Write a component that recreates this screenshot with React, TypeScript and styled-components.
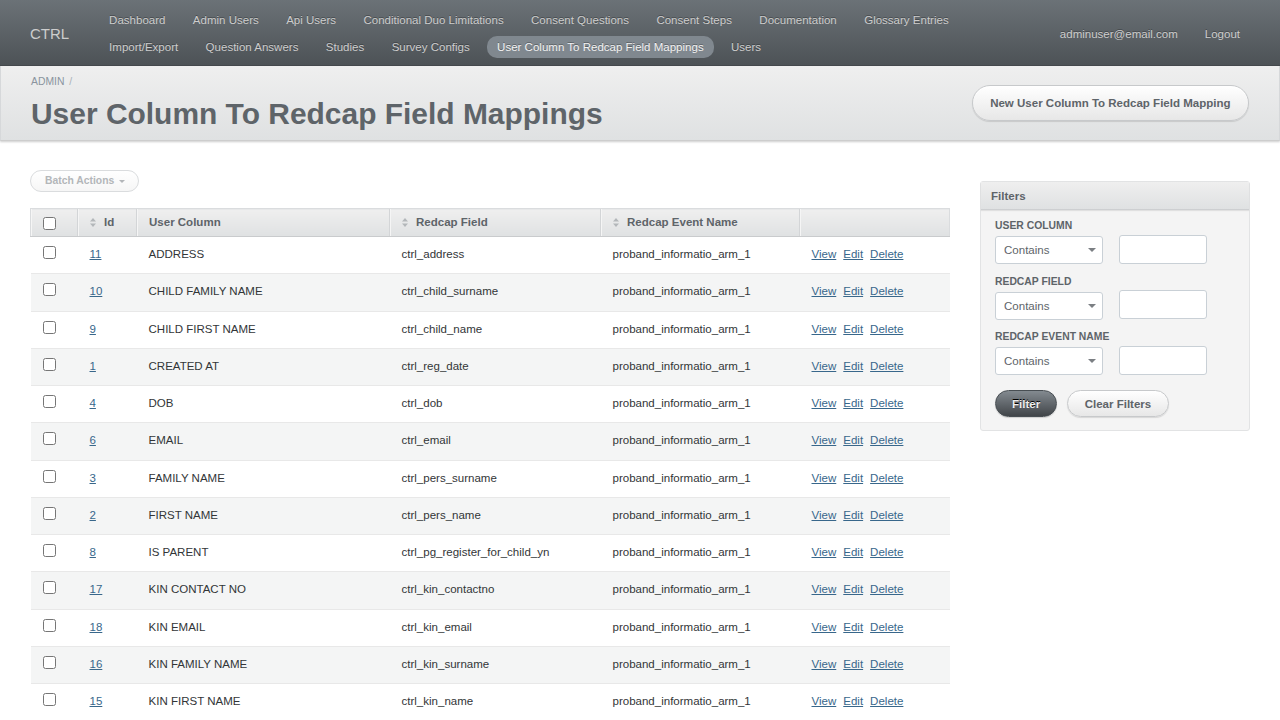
import React from 'react';
import styled, { createGlobalStyle } from 'styled-components';

const GlobalStyle = createGlobalStyle`
  html, body {
    margin: 0;
    padding: 0;
    background: #fff;
  }
  body {
    font-family: 'Liberation Sans', Arial, Helvetica, sans-serif;
    font-size: 11.52px;
    line-height: 1.5;
    color: #323537;
  }
  * {
    box-sizing: border-box;
  }
`;

type Mapping = {
  id: number;
  column: string;
  field: string;
  event: string;
};

const mappings: Mapping[] = [
  { id: 11, column: 'ADDRESS', field: 'ctrl_address', event: 'proband_informatio_arm_1' },
  { id: 10, column: 'CHILD FAMILY NAME', field: 'ctrl_child_surname', event: 'proband_informatio_arm_1' },
  { id: 9, column: 'CHILD FIRST NAME', field: 'ctrl_child_name', event: 'proband_informatio_arm_1' },
  { id: 1, column: 'CREATED AT', field: 'ctrl_reg_date', event: 'proband_informatio_arm_1' },
  { id: 4, column: 'DOB', field: 'ctrl_dob', event: 'proband_informatio_arm_1' },
  { id: 6, column: 'EMAIL', field: 'ctrl_email', event: 'proband_informatio_arm_1' },
  { id: 3, column: 'FAMILY NAME', field: 'ctrl_pers_surname', event: 'proband_informatio_arm_1' },
  { id: 2, column: 'FIRST NAME', field: 'ctrl_pers_name', event: 'proband_informatio_arm_1' },
  { id: 8, column: 'IS PARENT', field: 'ctrl_pg_register_for_child_yn', event: 'proband_informatio_arm_1' },
  { id: 17, column: 'KIN CONTACT NO', field: 'ctrl_kin_contactno', event: 'proband_informatio_arm_1' },
  { id: 18, column: 'KIN EMAIL', field: 'ctrl_kin_email', event: 'proband_informatio_arm_1' },
  { id: 16, column: 'KIN FAMILY NAME', field: 'ctrl_kin_surname', event: 'proband_informatio_arm_1' },
  { id: 15, column: 'KIN FIRST NAME', field: 'ctrl_kin_name', event: 'proband_informatio_arm_1' },
];

const navItems = [
  'Dashboard',
  'Admin Users',
  'Api Users',
  'Conditional Duo Limitations',
  'Consent Questions',
  'Consent Steps',
  'Documentation',
  'Glossary Entries',
  'Import/Export',
  'Question Answers',
  'Studies',
  'Survey Configs',
  'User Column To Redcap Field Mappings',
  'Users',
];

const ACTIVE_NAV = 'User Column To Redcap Field Mappings';

const filters = ['User Column', 'Redcap Field', 'Redcap Event Name'];

const SortIcon: React.FC = () => (
  <SortGlyph width="6" height="9" viewBox="0 0 6 9">
    <path d="M3 0 L6 3.4 L0 3.4 Z" fill="#b3b7ba" />
    <path d="M3 9 L6 5.6 L0 5.6 Z" fill="#b3b7ba" />
  </SortGlyph>
);

export default function App() {
  return (
    <>
      <GlobalStyle />
      <Header>
        <SiteTitle>CTRL</SiteTitle>
        <Tabs>
          {navItems.map((item) => (
            <Tab key={item} $current={item === ACTIVE_NAV}>
              {item}
            </Tab>
          ))}
        </Tabs>
        <UtilityNav>
          <Tab>adminuser@email.com</Tab>
          <Tab>Logout</Tab>
        </UtilityNav>
      </Header>

      <TitleBar>
        <div>
          <Breadcrumb>
            ADMIN <span>/</span>
          </Breadcrumb>
          <PageTitle>User Column To Redcap Field Mappings</PageTitle>
        </div>
        <ActionButton>New User Column To Redcap Field Mapping</ActionButton>
      </TitleBar>

      <Content>
        <Main>
          <BatchButton>
            Batch Actions <Caret />
          </BatchButton>

          <IndexTable>
            <colgroup>
              <col style={{ width: 47 }} />
              <col style={{ width: 59 }} />
              <col style={{ width: 253 }} />
              <col style={{ width: 211 }} />
              <col style={{ width: 199 }} />
              <col />
            </colgroup>
            <thead>
              <tr>
                <Th>
                  <Check type="checkbox" />
                </Th>
                <Th $sortable>
                  <SortIcon />
                  Id
                </Th>
                <Th>User Column</Th>
                <Th $sortable>
                  <SortIcon />
                  Redcap Field
                </Th>
                <Th $sortable>
                  <SortIcon />
                  Redcap Event Name
                </Th>
                <Th />
              </tr>
            </thead>
            <tbody>
              {mappings.map((row, i) => (
                <Row key={row.id} $even={i % 2 === 1}>
                  <Td>
                    <Check type="checkbox" />
                  </Td>
                  <Td>
                    <Link href="#">{row.id}</Link>
                  </Td>
                  <Td>{row.column}</Td>
                  <Td>{row.field}</Td>
                  <Td>{row.event}</Td>
                  <Td>
                    <MemberLink href="#">View</MemberLink>
                    <MemberLink href="#">Edit</MemberLink>
                    <MemberLink href="#">Delete</MemberLink>
                  </Td>
                </Row>
              ))}
            </tbody>
          </IndexTable>
        </Main>

        <Sidebar>
          <Panel>
            <PanelHeader>Filters</PanelHeader>
            <PanelBody>
              {filters.map((name) => (
                <FilterGroup key={name}>
                  <FilterLabel>{name}</FilterLabel>
                  <FilterRow>
                    <SelectWrap>
                      <Select defaultValue="contains">
                        <option value="contains">Contains</option>
                        <option value="equals">Equals</option>
                        <option value="starts_with">Starts with</option>
                        <option value="ends_with">Ends with</option>
                      </Select>
                      <SelectArrow />
                    </SelectWrap>
                    <TextInput type="text" />
                  </FilterRow>
                </FilterGroup>
              ))}
              <Buttons>
                <Button $primary>Filter</Button>
                <Button>Clear Filters</Button>
              </Buttons>
            </PanelBody>
          </Panel>
        </Sidebar>
      </Content>
    </>
  );
}

const Header = styled.header`
  display: flex;
  align-items: center;
  height: 66px;
  padding: 2px 30px 0;
  background: linear-gradient(180deg, #6b7277 0%, #4d5256 100%);
  border-bottom: 1px solid #45494d;
`;

const SiteTitle = styled.h1`
  margin: 0 30px 0 0;
  font-size: 14.98px;
  font-weight: normal;
  color: #cdcdcd;
  line-height: 1;
`;

const Tabs = styled.nav`
  flex: 1;
  display: flex;
  flex-wrap: wrap;
  column-gap: 7.4px;
  row-gap: 5px;
  align-content: center;
`;

const UtilityNav = styled.nav`
  display: flex;
  column-gap: 7px;
`;

const Tab = styled.a<{ $current?: boolean }>`
  display: block;
  height: 22px;
  line-height: 22px;
  padding: 0 10px;
  border-radius: 10px;
  color: ${(p) => (p.$current ? '#f2f2f2' : '#cdcdcd')};
  background: ${(p) => (p.$current ? '#80888f' : 'transparent')};
  text-shadow: 0 -1px 0 rgba(0, 0, 0, 0.3);
  white-space: nowrap;
  cursor: pointer;
`;

const TitleBar = styled.div`
  display: flex;
  align-items: center;
  justify-content: space-between;
  height: 75px;
  padding: 0 30px;
  background: linear-gradient(180deg, #efefef 0%, #dfe1e2 100%);
  border-bottom: 1px solid #cdcdcd;
  border-left: 1px solid #d6d8da;
  border-right: 1px solid #d6d8da;
  box-shadow: 0 1px 2px rgba(0, 0, 0, 0.2);
`;

const Breadcrumb = styled.div`
  font-size: 10.37px;
  line-height: 13px;
  color: #8a949e;
  margin-top: 1px;

  span {
    margin-left: 2px;
    color: #aab1b7;
  }
`;

const PageTitle = styled.h2`
  margin: 8px 0 0;
  font-size: 29.95px;
  line-height: 36px;
  font-weight: bold;
  color: #5e6469;
`;

const ActionButton = styled.a`
  display: block;
  height: 36px;
  line-height: 35px;
  padding: 0 17.5px;
  border: 1px solid #c7c9cb;
  border-radius: 200px;
  background: linear-gradient(180deg, #ffffff 0%, #e7e7e7 100%);
  box-shadow: 0 1px 1px rgba(0, 0, 0, 0.12), inset 0 1px 0 #fff;
  font-weight: bold;
  color: #5e6469;
  cursor: pointer;
`;

const Content = styled.div`
  display: flex;
  gap: 30px;
  padding: 29px 30px 30px;
`;

const Main = styled.div`
  flex: 1;
  min-width: 0;
`;

const BatchButton = styled.span`
  display: inline-flex;
  align-items: center;
  height: 22px;
  padding: 0 13px 0 14px;
  border: 1px solid #dadcde;
  border-radius: 200px;
  background: linear-gradient(180deg, #ffffff 0%, #f6f6f6 100%);
  font-size: 10.37px;
  font-weight: bold;
  color: #b3b6b9;
`;

const Caret = styled.span`
  width: 0;
  height: 0;
  margin-left: 5px;
  border-left: 3px solid transparent;
  border-right: 3px solid transparent;
  border-top: 3px solid #b3b6b9;
`;

const IndexTable = styled.table`
  width: 100%;
  margin-top: 16px;
  border-collapse: collapse;
  border-spacing: 0;
  table-layout: fixed;
`;

const Th = styled.th<{ $sortable?: boolean }>`
  position: relative;
  height: 28px;
  padding: 0 12px 0 ${(p) => (p.$sortable ? '26px' : '12px')};
  text-align: left;
  font-weight: bold;
  color: #5e6469;
  background: linear-gradient(180deg, #efefef 0%, #dfe1e2 100%);
  border-top: 1px solid #dadcde;
  border-bottom: 1px solid #c9cbcd;
  border-left: 1px solid #d3d5d7;
  box-shadow: inset 1px 0 0 #f5f5f5;
  white-space: nowrap;

  &:first-child {
    border-left: 1px solid #dadcde;
  }
  &:last-child {
    border-right: 1px solid #dadcde;
  }
`;

const SortGlyph = styled.svg`
  position: absolute;
  left: 12px;
  top: 9px;
`;

const Row = styled.tr<{ $even?: boolean }>`
  background: ${(p) => (p.$even ? '#f4f5f5' : '#ffffff')};
`;

const Td = styled.td`
  padding: 8px 12px 10px;
  line-height: 18.25px;
  vertical-align: top;
  border-bottom: 1px solid #e8e8e8;
  color: #323537;
  white-space: nowrap;
  overflow: hidden;
`;

const Check = styled.input`
  display: block;
  width: 13px;
  height: 13px;
  margin: 1px 0 0;
`;

const Link = styled.a`
  color: #38678b;
  text-decoration: underline;
`;

const MemberLink = styled(Link)`
  margin-right: 7px;
`;

const Sidebar = styled.aside`
  width: 270px;
  flex-shrink: 0;
  padding-top: 11px;
`;

const Panel = styled.div`
  background: #f4f4f4;
  border: 1px solid #e2e3e4;
  border-radius: 3px;
  box-shadow: inset 0 1px 0 #fff;
`;

const PanelHeader = styled.h3`
  margin: 0;
  height: 28px;
  line-height: 28px;
  padding: 0 10px;
  font-size: 11.52px;
  font-weight: bold;
  color: #5e6469;
  background: linear-gradient(180deg, #efefef 0%, #dfe1e2 100%);
  border-bottom: 1px solid #cdcfd1;
  box-shadow: 0 1px 1px rgba(0, 0, 0, 0.08);
`;

const PanelBody = styled.div`
  padding: 9px 14px 13px;
`;

const FilterGroup = styled.div`
  margin-bottom: 10.5px;
`;

const FilterLabel = styled.label`
  display: block;
  font-size: 10.37px;
  line-height: 14px;
  font-weight: bold;
  text-transform: uppercase;
  color: #5e6469;
  margin-bottom: 3px;
`;

const FilterRow = styled.div`
  display: flex;
  align-items: center;
  gap: 16px;
`;

const SelectWrap = styled.div`
  position: relative;
  width: 108px;
  height: 28px;
`;

const Select = styled.select`
  appearance: none;
  width: 100%;
  height: 100%;
  padding: 0 8px;
  border: 1px solid #c9d0d6;
  border-radius: 3px;
  background: #fff;
  font-family: inherit;
  font-size: 11.52px;
  color: #5e6469;
`;

const SelectArrow = styled.span`
  position: absolute;
  right: 7px;
  top: 12px;
  width: 0;
  height: 0;
  border-left: 4px solid transparent;
  border-right: 4px solid transparent;
  border-top: 4px solid #7b7f83;
  pointer-events: none;
`;

const TextInput = styled.input`
  width: 88px;
  height: 29px;
  margin-top: -2px;
  border: 1px solid #c9d0d6;
  border-radius: 3px;
  background: #fff;
`;

const Buttons = styled.div`
  display: flex;
  gap: 10px;
  margin-top: 15px;
`;

const Button = styled.button<{ $primary?: boolean }>`
  height: 27px;
  padding: 0 ${(p) => (p.$primary ? '16px' : '16.5px')};
  border-radius: 200px;
  font-family: inherit;
  font-size: 11.52px;
  font-weight: bold;
  cursor: pointer;
  ${(p) =>
    p.$primary
      ? `
    color: #efefef;
    border: 1px solid #484e53;
    background: linear-gradient(180deg, #838a90 0%, #414549 100%);
    text-shadow: 0 -1px 0 #000;
    box-shadow: 0 1px 1px rgba(0,0,0,0.15);
  `
      : `
    color: #5e6469;
    border: 1px solid #c7c9cb;
    background: linear-gradient(180deg, #ffffff 0%, #e7e7e7 100%);
    box-shadow: 0 1px 1px rgba(0,0,0,0.12);
  `}
`;
